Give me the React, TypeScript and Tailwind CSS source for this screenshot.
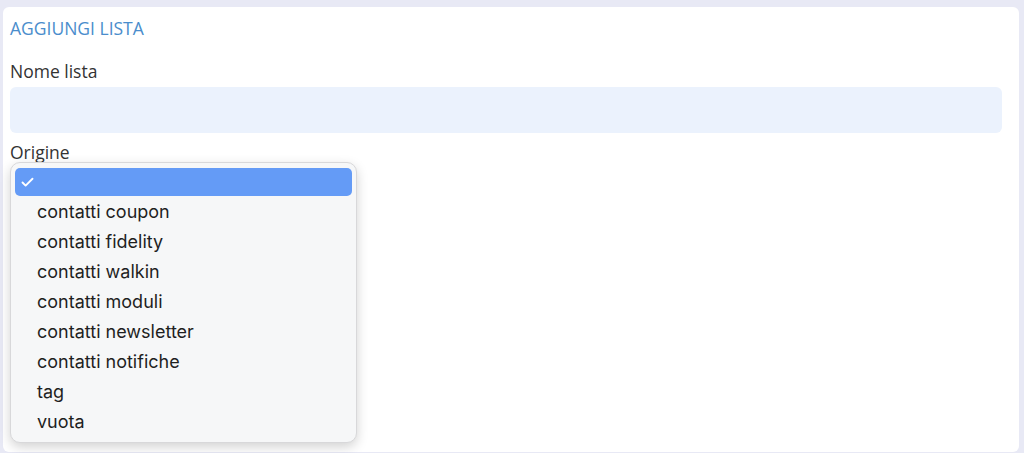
import { Check } from 'lucide-react';

const options = [
  'contatti coupon',
  'contatti fidelity',
  'contatti walkin',
  'contatti moduli',
  'contatti newsletter',
  'contatti notifiche',
  'tag',
  'vuota',
];

export default function App() {
  return (
    <div className="h-[453px] w-[1024px] overflow-hidden bg-[#e8e9f5] pt-[7px] pr-[5px] pl-[3px] font-['Open_Sans',sans-serif]">
      <div className="h-[445px] rounded-[6px] bg-white pt-[10px] pr-[17px] pl-[7px]">
        <h2 className="text-[17.5px] leading-[22px] text-[#4a8dcc]">AGGIUNGI LISTA</h2>

        <label className="mt-[21px] block text-[17.5px] leading-[22px] text-[#333]">Nome lista</label>
        <div className="mt-[5px] h-[46px] rounded-[6px] bg-[#ebf2fd]" />

        <label className="mt-[8px] block text-[17.5px] leading-[22px] text-[#333]">Origine</label>

        <div className="relative">
          <div className="absolute top-[-1px] left-0 z-10 w-[347px] rounded-[10px] border border-[#d8d8da] bg-[#f6f7f8] px-[4px] pt-[5px] pb-[6px] font-['Inter',sans-serif] shadow-[0_4px_12px_rgba(0,0,0,0.18)]">
            <div className="flex h-[28px] items-center rounded-[5px] bg-[#649bf6] pl-[5px] text-white">
              <Check size={15} strokeWidth={3} />
            </div>
            {options.map((o) => (
              <div key={o} className="flex h-[30px] items-center pl-[22px] text-[18px] text-[#1f1f1f]">
                {o}
              </div>
            ))}
          </div>
        </div>
      </div>
    </div>
  );
}
